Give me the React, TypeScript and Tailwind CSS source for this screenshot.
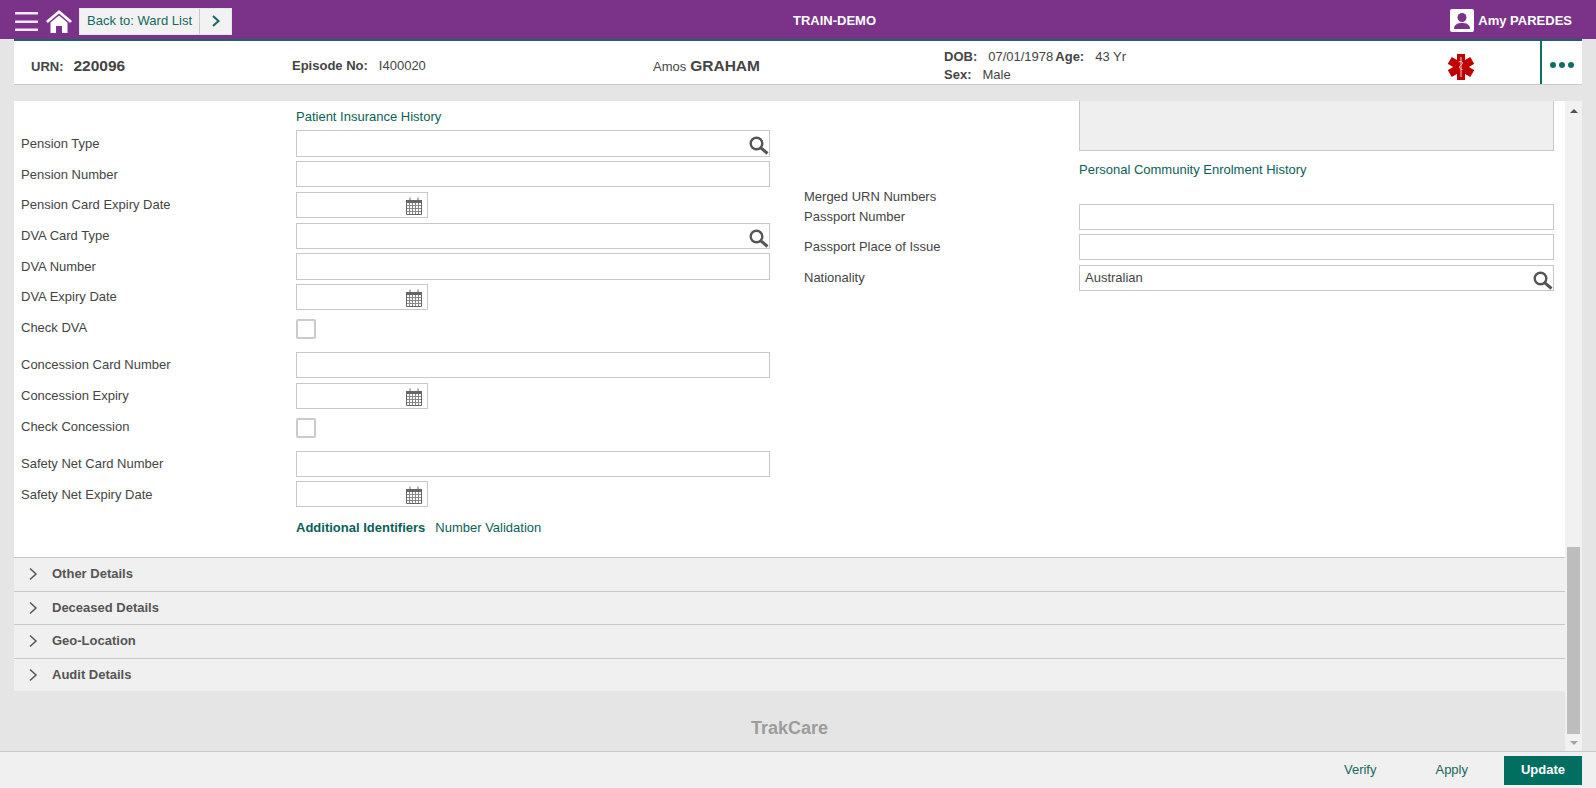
import type { ReactNode } from "react";

const teal = "text-[#0b5f56]";

function SearchIcon() {
  return (
    <svg width="20" height="19" viewBox="0 0 20 19" fill="none" stroke="#555" className="absolute right-0 top-[5px]">
      <circle cx="7.5" cy="7.5" r="5.8" strokeWidth="2.4" />
      <path d="M11.8 11.8 L18.5 17.5" strokeWidth="3" />
    </svg>
  );
}

function CalendarIcon() {
  return (
    <svg width="16" height="18" viewBox="0 0 16 18" className="absolute right-[5px] top-[4px]" fill="none">
      <path d="M0.5 3.5h15v14h-15z" stroke="#666" fill="#fff" />
      <path d="M0 3h16v3H0z" fill="#666" />
      <path d="M4 0.5v4M12 0.5v4" stroke="#666" />
      <path d="M3.5 6v11M6.5 6v11M9.5 6v11M12.5 6v11M1 8.5h14M1 11.5h14M1 14.5h14" stroke="#888" />
    </svg>
  );
}

function Field({ wide = true, tall, icon, value }: { wide?: boolean; tall?: boolean; icon?: ReactNode; value?: string }) {
  return (
    <div
      className={`relative border border-[#c8c8c8] bg-white pl-[5px] text-[13px] leading-[24px] text-[#444] ${
        tall ? "h-[27px]" : "h-[26px]"
      } ${wide ? "w-full" : "w-[132px]"}`}
    >
      {value}
      {icon}
    </div>
  );
}

function Check() {
  return <div className="h-[20px] w-[20px] rounded-[2px] border-2 border-[#cbcbcb] bg-white" />;
}

function Row({
  label,
  children,
  className = "",
  labelTop = "pt-[5px]",
}: {
  label: string;
  children: ReactNode;
  className?: string;
  labelTop?: string;
}) {
  return (
    <div className={`flex items-start ${className}`}>
      <div className={`w-[282px] shrink-0 pl-[7px] text-[13px] leading-[16px] text-[#444] ${labelTop}`}>{label}</div>
      <div className="w-[474px]">{children}</div>
    </div>
  );
}

function Accordion({ title, height }: { title: string; height: string }) {
  return (
    <div className={`flex items-center border-t border-[#c8c8c8] bg-[#f0f0f0] pl-[14px] ${height}`}>
      <svg width="10" height="14" viewBox="0 0 10 14" fill="none" stroke="#555" strokeWidth="1.5">
        <path d="M2 1.5 L8 7 L2 12.5" />
      </svg>
      <span className="ml-[14px] text-[13px] font-bold text-[#555]">{title}</span>
    </div>
  );
}

function RightRow({ label, value, icon, className = "" }: { label: string; value?: string; icon?: ReactNode; className?: string }) {
  return (
    <div className={`flex items-start ${className}`}>
      <div className="w-[275px] shrink-0 pt-[5px] text-[13px] leading-[16px] text-[#444]">{label}</div>
      <div className="w-[475px]">
        <Field value={value} icon={icon} />
      </div>
    </div>
  );
}

export default function App() {
  return (
    <div className="flex h-[788px] w-[1596px] flex-col overflow-hidden bg-[#e5e5e5] font-['Liberation_Sans',Arial,sans-serif]">
      <header className="flex h-[39px] shrink-0 items-center bg-[#7b3289] pl-[15px] pr-[24px] pt-[3px] text-white">
        <svg width="23" height="19" viewBox="0 0 23 19" fill="#f3e9f3" className="mt-[1px]">
          <rect y="0" width="23" height="2.5" />
          <rect y="8.5" width="23" height="2.5" />
          <rect y="16.5" width="23" height="2.5" />
        </svg>
        <svg width="26" height="23" viewBox="0 0 26 23" className="ml-[8px]" fill="#fff">
          <path d="M13 0 L26 11 L24.2 13 L13 3.6 L1.8 13 L0 11 Z" />
          <path d="M4.5 12.5 L13 5.5 L21.5 12.5 V23 H16 V16 H10 V23 H4.5 Z" />
        </svg>
        <div className="ml-[7px] flex h-[27px] items-center border border-[#e6e6e6] bg-[#f2f2f2] text-[13px] text-[#13695f]">
          <span className="px-[7px]">Back to: Ward List</span>
          <span className="flex h-full w-[32px] items-center justify-center border-l border-[#c8c8c8]">
            <svg width="10" height="12" viewBox="0 0 10 12" fill="none" stroke="#13695f" strokeWidth="2">
              <path d="M2 1 L7.5 6 L2 11" />
            </svg>
          </span>
        </div>
        <div className="ml-[561px] text-[13px] font-bold">TRAIN-DEMO</div>
        <div className="ml-auto flex items-center">
          <svg width="24" height="24" viewBox="0 0 24 24">
            <rect width="24" height="23" rx="2" fill="#fff" />
            <circle cx="12" cy="8.5" r="4.5" fill="#7b3289" />
            <path d="M4 20 C4 15 8 14 12 14 C16 14 20 15 20 20 Z" fill="#7b3289" />
          </svg>
          <span className="ml-[4px] text-[13px] font-bold">Amy PAREDES</span>
        </div>
      </header>

      <div className="mx-[14px] flex h-[46px] shrink-0 items-center border-t-2 border-b border-t-[#1f5f68] border-b-[#c8c8c8] bg-white text-[13px] text-[#444]">
        <div className="flex w-[278px] items-baseline pl-[17px] pt-[6px]">
          <span className="font-bold">URN:</span>
          <span className="ml-[10px] text-[15.5px] font-bold">220096</span>
        </div>
        <div className="flex w-[361px] items-baseline pt-[6px]">
          <span className="font-bold">Episode No:</span>
          <span className="ml-[11px]">I400020</span>
        </div>
        <div className="flex w-[291px] items-baseline pt-[6px]">
          <span>Amos</span>
          <span className="ml-[4px] text-[15.5px] font-bold">GRAHAM</span>
        </div>
        <div className="w-[500px] pt-[6px] leading-[18px]">
          <div>
            <span className="font-bold">DOB:</span>
            <span className="ml-[11px]">07/01/1978</span>
            <span className="ml-[2px] font-bold">Age:</span>
            <span className="ml-[11px]">43 Yr</span>
          </div>
          <div>
            <span className="font-bold">Sex:</span>
            <span className="ml-[11px]">Male</span>
          </div>
        </div>
        <svg width="26" height="26" viewBox="0 0 26 26" fill="#c00000" className="ml-[4px] mt-[9px]">
          <rect x="9" y="0" width="8" height="26" />
          <rect x="9" y="0" width="8" height="26" transform="rotate(60 13 13)" />
          <rect x="9" y="0" width="8" height="26" transform="rotate(120 13 13)" />
          <path d="M13 3v20M10.5 8c3.5-1.5 5.5 1 2.5 3s-1.5 4 1.5 4.5" stroke="#f3d0d0" strokeWidth="1" fill="none" />
        </svg>
        <div className="ml-auto flex h-full w-[42px] items-center justify-center gap-[3px] border-l-2 border-[#0f6f64] pt-[5px]">
          <span className="h-[6px] w-[6px] rounded-full bg-[#0f6f64]" />
          <span className="h-[6px] w-[6px] rounded-full bg-[#0f6f64]" />
          <span className="h-[6px] w-[6px] rounded-full bg-[#0f6f64]" />
        </div>
      </div>

      <div className="mt-[16px] flex min-h-0 flex-1 pl-[14px] pr-[14px]">
        <div className="flex min-w-0 flex-1 flex-col">
          <div className="flex h-[456px] shrink-0 bg-white">
            <div className="w-[790px] shrink-0">
              <div className={`pl-[282px] pt-[8px] text-[13px] leading-[16px] ${teal}`}>Patient Insurance History</div>
              <Row label="Pension Type" className="mt-[5px]" labelTop="pt-[6px]"><Field tall icon={<SearchIcon />} /></Row>
              <Row label="Pension Number" className="mt-[4px]" labelTop="pt-[6px]"><Field /></Row>
              <Row label="Pension Card Expiry Date" className="mt-[5px]"><Field wide={false} icon={<CalendarIcon />} /></Row>
              <Row label="DVA Card Type" className="mt-[5px]"><Field icon={<SearchIcon />} /></Row>
              <Row label="DVA Number" className="mt-[4px]" labelTop="pt-[6px]"><Field tall /></Row>
              <Row label="DVA Expiry Date" className="mt-[4px]"><Field wide={false} icon={<CalendarIcon />} /></Row>
              <Row label="Check DVA" className="mt-[9px]" labelTop="pt-[1px]"><Check /></Row>
              <Row label="Concession Card Number" className="mt-[13px]"><Field /></Row>
              <Row label="Concession Expiry" className="mt-[5px]"><Field wide={false} icon={<CalendarIcon />} /></Row>
              <Row label="Check Concession" className="mt-[9px]" labelTop="pt-[1px]"><Check /></Row>
              <Row label="Safety Net Card Number" className="mt-[13px]"><Field /></Row>
              <Row label="Safety Net Expiry Date" className="mt-[4px]" labelTop="pt-[6px]"><Field wide={false} icon={<CalendarIcon />} /></Row>
              <div className="mt-[13px] flex pl-[282px] text-[13px] leading-[16px]">
                <span className={`font-bold ${teal}`}>Additional Identifiers</span>
                <span className={`ml-[10px] ${teal}`}>Number Validation</span>
              </div>
            </div>
            <div className="flex-1">
              <div className="ml-[275px] h-[50px] w-[475px] border-x border-b border-[#c8c8c8] bg-[#efefef]" />
              <div className={`ml-[275px] mt-[11px] text-[13px] leading-[16px] ${teal}`}>Personal Community Enrolment History</div>
              <div className="mt-[11px] text-[13px] leading-[16px] text-[#444]">Merged URN Numbers</div>
              <div className="mt-[-1px] flex flex-col">
                <RightRow label="Passport Number" />
                <RightRow label="Passport Place of Issue" className="mt-[4px]" />
                <RightRow label="Nationality" value="Australian" icon={<SearchIcon />} className="mt-[5px]" />
              </div>
            </div>
          </div>
          <Accordion title="Other Details" height="h-[34px] pb-[1px]" />
          <Accordion title="Deceased Details" height="h-[33px]" />
          <Accordion title="Geo-Location" height="h-[34px] pb-[1px]" />
          <Accordion title="Audit Details" height="h-[33px]" />
          <div className="flex-1 pt-[24px] text-center text-[18px] font-bold text-[#9c9c9c]">TrakCare</div>
        </div>
        <div className="relative w-[17px] shrink-0 bg-[#f1f1f1]">
          <span className="absolute left-[5px] top-[8px] h-0 w-0 border-x-[4px] border-b-[4px] border-x-transparent border-b-[#505050]" />
          <div className="absolute bottom-[17px] left-[2px] h-[187px] w-[13px] bg-[#bdbdbd]" />
          <span className="absolute bottom-[6px] left-[5px] h-0 w-0 border-x-[4px] border-t-[4px] border-x-transparent border-t-[#a3a3a3]" />
        </div>
      </div>

      <footer className="flex h-[37px] shrink-0 items-center justify-end border-t border-[#c8c8c8] bg-[#f0f0f0] pr-[14px] text-[13px] text-[#13695f]">
        <span className="mr-[59px]">Verify</span>
        <span className="mr-[36px]">Apply</span>
        <span className="flex h-[29px] w-[78px] items-center justify-center bg-[#006e60] font-bold text-white">Update</span>
      </footer>
    </div>
  );
}
